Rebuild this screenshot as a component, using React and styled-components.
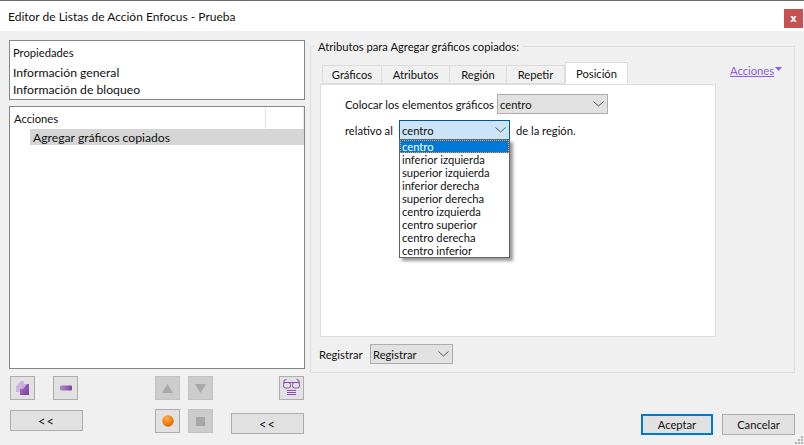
import React from "react";
import styled, { createGlobalStyle } from "styled-components";

const GlobalStyle = createGlobalStyle`
  html, body {
    margin: 0;
    padding: 0;
    background: #f0f0f0;
  }
  body {
    font-family: Lato, "Open Sans", sans-serif;
    font-size: 11.2px;
    color: #111;
    white-space: nowrap;
  }
`;

const Window = styled.div`
  width: 804px;
  height: 445px;
  overflow: hidden;
  position: relative;
  background: #f0f0f0;
`;

const TitleBar = styled.div`
  height: 30px;
  border-top: 1px solid #6b6b6b;
  background: #fff;
  display: flex;
  align-items: center;
  justify-content: space-between;
  padding: 0 1px 0 8px;
  font-size: 12px;
`;

const CloseButton = styled.div`
  width: 19px;
  height: 19px;
  margin-top: 5px;
  background: #c75050;
  color: #fff;
  font-family: "DejaVu Sans", sans-serif;
  font-size: 10px;
  font-weight: bold;
  display: flex;
  align-items: center;
  justify-content: center;
`;

const Body = styled.div`
  display: flex;
  height: 414px;
  padding: 9px 9px 0 9px;
  box-sizing: border-box;
`;

const LeftColumn = styled.div`
  width: 296px;
  margin-right: 5px;
  display: flex;
  flex-direction: column;
`;

const ListBox = styled.div`
  border: 1px solid #82878c;
  background: #fff;
  box-sizing: border-box;
  height: ${(p) => p.$height}px;
  margin-bottom: ${(p) => p.$gap || 0}px;
  position: relative;
`;

const ListHeader = styled.div`
  height: 17px;
  line-height: 17px;
  padding-left: 3px;
  margin-top: 3px;
  margin-bottom: 3px;
`;

const ListRow = styled.div`
  height: 17px;
  line-height: 17px;
  padding-left: 3px;
  font-size: 12.2px;
`;

const ActionsHeader = styled.div`
  height: 22px;
  line-height: 24px;
  padding-left: 4px;
  display: flex;
  justify-content: space-between;
`;

const HeaderCell = styled.div`
  width: 39px;
  border-left: 1px solid #e3e3e3;
  border-right: 1px solid #e8e8e8;
  box-sizing: border-box;
`;

const SelectedAction = styled.div`
  margin-left: 20px;
  height: 16px;
  line-height: 17px;
  padding-left: 3px;
  background: #d5d5d5;
  font-size: 12.2px;
`;

const ToolRow = styled.div`
  display: flex;
  align-items: flex-start;
  height: ${(p) => p.$height}px;
  padding-left: 1px;
`;

const IconButton = styled.div`
  width: 25px;
  height: 24px;
  box-sizing: border-box;
  border: 1px solid ${(p) => (p.$disabled ? "#c2c2c2" : "#adadad")};
  background: ${(p) => (p.$disabled ? "#cccccc" : "#e1e1e1")};
  margin-left: ${(p) => p.$left || 0}px;
  display: flex;
  align-items: center;
  justify-content: center;
`;

const Button = styled.div`
  width: ${(p) => p.$width || 73}px;
  height: 21px;
  box-sizing: border-box;
  border: ${(p) => (p.$primary ? "2px solid #0078d7" : "1px solid #adadad")};
  background: #e1e1e1;
  margin-left: ${(p) => p.$left || 0}px;
  margin-top: ${(p) => p.$top || 0}px;
  display: flex;
  align-items: center;
  justify-content: center;
`;

const CollapseButton = styled(Button)`
  font-size: 13px;
  letter-spacing: 1px;
`;

const RightColumn = styled.div`
  width: 485px;
  display: flex;
  flex-direction: column;
`;

const Fieldset = styled.fieldset`
  margin: -1px 0 0 0;
  padding: 0 9px 0 9px;
  width: 485px;
  height: 334px;
  box-sizing: border-box;
  border: 1px solid #dcdcdc;
  min-width: 0;
`;

const Legend = styled.legend`
  margin-left: -6px;
  padding: 0 4px 0 4px;
  line-height: 15px;
`;

const TabHeader = styled.div`
  display: flex;
  justify-content: space-between;
  align-items: flex-start;
  height: 30px;
`;

const Tabs = styled.div`
  display: flex;
  align-items: flex-end;
  height: 30px;
  padding-left: 2px;
  margin-bottom: -1px;
  position: relative;
  z-index: 1;
`;

const Tab = styled.div`
  width: ${(p) => p.$width}px;
  height: ${(p) => (p.$active ? 22 : 19)}px;
  box-sizing: border-box;
  border: 1px solid #dcdcdc;
  border-left-width: ${(p) => (p.$active || p.$first ? 1 : 0)}px;
  border-bottom: ${(p) => (p.$active ? "1px solid #fff" : "1px solid #dcdcdc")};
  background: ${(p) => (p.$active ? "#fff" : "#f0f0f0")};
  display: flex;
  align-items: center;
  justify-content: center;
`;

const ActionsLink = styled.div`
  display: flex;
  align-items: center;
  color: #8a5cf5;
  margin-top: 10px;
  margin-right: 3px;
  text-decoration: underline;
  svg {
    margin-left: 1px;
    margin-bottom: 3px;
  }
`;

const TabPanel = styled.div`
  width: 396px;
  height: 253px;
  box-sizing: border-box;
  border: 1px solid #dcdcdc;
  background: #fff;
  padding: 9px 0 0 24px;
`;

const FormRow = styled.div`
  display: flex;
  align-items: center;
  height: 20px;
  margin-bottom: 6px;
  position: relative;
`;

const FormLabel = styled.div`
  width: ${(p) => p.$width}px;
  flex: none;
`;

const Combo = styled.div`
  width: ${(p) => p.$width}px;
  height: 20px;
  box-sizing: border-box;
  border: 1px solid ${(p) => (p.$open ? "#0054a6" : "#adadad")};
  background: ${(p) => (p.$open ? "#cce4f7" : "#e1e1e1")};
  display: flex;
  align-items: center;
  justify-content: space-between;
  padding: 0 3px 0 2px;
  position: relative;
`;

const AfterCombo = styled.span`
  margin-left: 6px;
`;

const Dropdown = styled.div`
  position: absolute;
  left: -1px;
  top: 18px;
  width: 111px;
  box-sizing: border-box;
  border: 1px solid #646464;
  background: #fff;
  box-shadow: 3px 3px 3px rgba(0, 0, 0, 0.4);
  z-index: 5;
`;

const DropItem = styled.div`
  height: 13px;
  line-height: 13px;
  padding-left: 2px;
  background: ${(p) => (p.$selected ? "#0078d7" : "transparent")};
  color: ${(p) => (p.$selected ? "#fff" : "#111")};
  outline: ${(p) => (p.$selected ? "1px dotted #f0a040" : "none")};
  outline-offset: -1px;
`;

const RegisterRow = styled.div`
  display: flex;
  align-items: center;
  height: 20px;
  margin: 7px 0 0 -1px;
`;

const Footer = styled.div`
  display: flex;
  justify-content: flex-end;
  margin-top: 41px;
`;

const Grip = styled.svg`
  position: absolute;
  right: 0;
  bottom: 0;
`;

const Chevron = () => (
  <svg width="11" height="6" viewBox="0 0 11 6">
    <path d="M0.5 0.5 L5.5 5 L10.5 0.5" fill="none" stroke="#555" strokeWidth="1" />
  </svg>
);

const AddIcon = () => (
  <svg width="15" height="16" viewBox="0 0 15 16">
    <defs>
      <linearGradient id="add" x1="0" y1="0" x2="1" y2="1">
        <stop offset="0" stopColor="#a877c8" />
        <stop offset="1" stopColor="#7b3a9e" />
      </linearGradient>
    </defs>
    <path d="M1 6 L6 1 H9 V5 L5 9 V12 H1 Z" fill="#cdb3dd" />
    <path d="M5 9 L10 4 H14 V15 H5 Z" fill="url(#add)" />
    <path d="M5 9 L10 4 H12 L8 9 Z" fill="#c9aedb" />
  </svg>
);

const RemoveIcon = () => (
  <svg width="12" height="6" viewBox="0 0 12 6">
    <defs>
      <linearGradient id="rem" x1="0" y1="0" x2="1" y2="0">
        <stop offset="0" stopColor="#b08bca" />
        <stop offset="1" stopColor="#7e3fa1" />
      </linearGradient>
    </defs>
    <rect x="0" y="0.5" width="12" height="5" rx="1" fill="url(#rem)" />
  </svg>
);

const TriangleIcon = ({ down }) => (
  <svg width="11" height="11" viewBox="0 0 11 11">
    <path d={down ? "M0 1 H11 L5.5 10 Z" : "M5.5 1 L11 10 H0 Z"} fill="#a8a8a8" />
  </svg>
);

const RecordIcon = () => (
  <svg width="12" height="12" viewBox="0 0 12 12">
    <defs>
      <radialGradient id="rec" cx="0.4" cy="0.3" r="0.8">
        <stop offset="0" stopColor="#ffb347" />
        <stop offset="0.6" stopColor="#f27a10" />
        <stop offset="1" stopColor="#d85a05" />
      </radialGradient>
    </defs>
    <circle cx="6" cy="6" r="5.7" fill="url(#rec)" />
  </svg>
);

const StopIcon = () => (
  <svg width="9" height="9" viewBox="0 0 9 9">
    <rect width="9" height="9" fill="#a6a6a6" />
  </svg>
);

const GlassesIcon = () => (
  <svg width="17" height="18" viewBox="0 0 17 18" fill="none" stroke="#8d4bb0" strokeWidth="1">
    <path d="M1 4 V2 Q1 0.5 3.5 0.5 M16 4 V2 Q16 0.5 13.5 0.5" />
    <rect x="0.5" y="3.5" width="7" height="5.5" rx="2" />
    <rect x="9.5" y="3.5" width="7" height="5.5" rx="2" />
    <path d="M0.5 3.5 H16.5" />
    <path d="M4 11.5 H13 M4 13.5 H13 M4 15.5 H13" />
  </svg>
);

const tabs = [
  { label: "Gráficos", width: 60, first: true },
  { label: "Atributos", width: 68 },
  { label: "Región", width: 57 },
  { label: "Repetir", width: 58 },
  { label: "Posición", width: 63, active: true },
];

const positions = [
  "centro",
  "inferior izquierda",
  "superior izquierda",
  "inferior derecha",
  "superior derecha",
  "centro izquierda",
  "centro superior",
  "centro derecha",
  "centro inferior",
];

export default function App() {
  return (
    <Window>
      <GlobalStyle />
      <TitleBar>
        <span>Editor de Listas de Acción Enfocus - Prueba</span>
        <CloseButton>x</CloseButton>
      </TitleBar>
      <Body>
        <LeftColumn>
          <ListBox $height={60} $gap={6}>
            <ListHeader>Propiedades</ListHeader>
            <ListRow>Información general</ListRow>
            <ListRow>Información de bloqueo</ListRow>
          </ListBox>
          <ListBox $height={263} $gap={7}>
            <ActionsHeader>
              Acciones
              <HeaderCell />
            </ActionsHeader>
            <SelectedAction>Agregar gráficos copiados</SelectedAction>
          </ListBox>
          <ToolRow $height={33}>
            <IconButton><AddIcon /></IconButton>
            <IconButton $left={18}><RemoveIcon /></IconButton>
            <IconButton $left={77} $disabled><TriangleIcon /></IconButton>
            <IconButton $left={8} $disabled><TriangleIcon down /></IconButton>
            <IconButton $left={66}><GlassesIcon /></IconButton>
          </ToolRow>
          <ToolRow $height={24}>
            <CollapseButton $width={73} $top={1}>&lt;&lt;</CollapseButton>
            <IconButton $left={72}><RecordIcon /></IconButton>
            <IconButton $left={8} $disabled><StopIcon /></IconButton>
            <CollapseButton $width={73} $left={18} $top={4}>&lt;&lt;</CollapseButton>
          </ToolRow>
        </LeftColumn>
        <RightColumn>
          <Fieldset>
            <Legend>Atributos para Agregar gráficos copiados:</Legend>
            <TabHeader>
              <Tabs>
                {tabs.map((t) => (
                  <Tab key={t.label} $width={t.width} $active={t.active} $first={t.first}>
                    {t.label}
                  </Tab>
                ))}
              </Tabs>
              <ActionsLink>
                Acciones
                <svg width="7" height="4" viewBox="0 0 7 4">
                  <path d="M0 0 H7 L3.5 4 Z" fill="#8a5cf5" />
                </svg>
              </ActionsLink>
            </TabHeader>
            <TabPanel>
              <FormRow>
                <FormLabel $width={152}>Colocar los elementos gráficos</FormLabel>
                <Combo $width={111}>
                  centro
                  <Chevron />
                </Combo>
              </FormRow>
              <FormRow>
                <FormLabel $width={54}>relativo al</FormLabel>
                <Combo $width={111} $open>
                  centro
                  <Chevron />
                  <Dropdown>
                    {positions.map((p, i) => (
                      <DropItem key={p} $selected={i === 0}>{p}</DropItem>
                    ))}
                  </Dropdown>
                </Combo>
                <AfterCombo>de la región.</AfterCombo>
              </FormRow>
            </TabPanel>
            <RegisterRow>
              <FormLabel $width={51}>Registrar</FormLabel>
              <Combo $width={83}>
                Registrar
                <Chevron />
              </Combo>
            </RegisterRow>
          </Fieldset>
          <Footer>
            <Button $width={72} $primary>Aceptar</Button>
            <Button $width={73} $left={9}>Cancelar</Button>
          </Footer>
        </RightColumn>
      </Body>
      <Grip width="10" height="10" viewBox="0 0 10 10" fill="#b4b4b4">
        <rect x="7" y="1" width="2" height="2" />
        <rect x="4" y="4" width="2" height="2" />
        <rect x="7" y="4" width="2" height="2" />
        <rect x="1" y="7" width="2" height="2" />
        <rect x="4" y="7" width="2" height="2" />
        <rect x="7" y="7" width="2" height="2" />
      </Grip>
    </Window>
  );
}
